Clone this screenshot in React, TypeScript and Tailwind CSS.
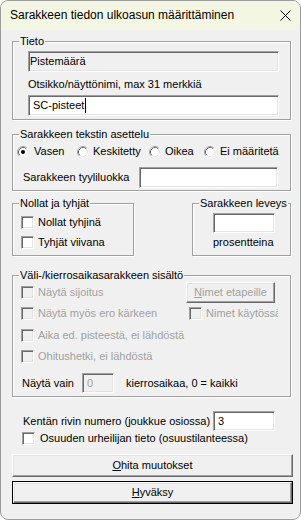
const sunken =
  "border border-t-[#a0a0a0] border-l-[#a0a0a0] border-r-white border-b-white shadow-[inset_1px_1px_0_#696969,inset_-1px_-1px_0_#e3e3e3]";
const raised =
  "border border-t-white border-l-white border-r-[#696969] border-b-[#696969] shadow-[inset_-1px_-1px_0_#a0a0a0,inset_1px_1px_0_#e3e3e3]";

function Group({ title, className = "", children }: { title: string; className?: string; children?: React.ReactNode }) {
  return (
    <div className={`border border-[#a0a0a0] shadow-[inset_1px_1px_0_#fff,1px_1px_0_#fff] ${className}`}>
      <div className="-mt-[7px] ml-[6px] w-fit px-[1px] bg-[#f0f0f0] leading-[13px] whitespace-nowrap">{title}</div>
      {children}
    </div>
  );
}

function Check({ disabled }: { disabled?: boolean }) {
  return <span className={`block w-[13px] h-[13px] shrink-0 ${sunken} ${disabled ? "bg-[#f0f0f0]" : "bg-white"}`} />;
}

function Radio({ checked }: { checked?: boolean }) {
  return (
    <svg width="12" height="12" viewBox="0 0 12 12" className="shrink-0">
      <circle cx="6" cy="6" r="5.5" fill="#fff" />
      <path d="M2.11 9.89 A5.5 5.5 0 0 1 9.89 2.11" fill="none" stroke="#a0a0a0" />
      <path d="M2.82 9.18 A4.5 4.5 0 0 1 9.18 2.82" fill="none" stroke="#696969" />
      <path d="M9.18 2.82 A4.5 4.5 0 0 1 2.82 9.18" fill="none" stroke="#e3e3e3" />
      {checked && <circle cx="6" cy="6" r="2" fill="#000" />}
    </svg>
  );
}

function CheckRow({ label, disabled, className = "" }: { label: string; disabled?: boolean; className?: string }) {
  return (
    <div className={`flex items-center gap-[4px] ${disabled ? "text-[#a0a0a0]" : ""} ${className}`}>
      <Check disabled={disabled} />
      <span className="whitespace-nowrap">{label}</span>
    </div>
  );
}

export default function App() {
  return (
    <div className="w-[301px] h-[520px] bg-white">
      <div className="w-[301px] h-[520px] rounded-[8px] border border-[#9c9c9c] bg-[#f0f0f0] overflow-hidden flex flex-col font-['Liberation_Sans',Arial,sans-serif] text-[11px] leading-[13px] text-black">
        <div className="h-[29px] shrink-0 bg-[#f3f6e2] flex items-center justify-between pl-[9px] pr-[9px]">
          <span className="text-[12px]">Sarakkeen tiedon ulkoasun määrittäminen</span>
          <svg width="11" height="11" viewBox="0 0 11 11">
            <path d="M0.5 0.5 L10.5 10.5 M10.5 0.5 L0.5 10.5" stroke="#000" strokeWidth="1" />
          </svg>
        </div>

        <div className="pl-[11px] flex flex-col">
          <Group title="Tieto" className="mt-[11px] w-[279px] pb-[3px]">
            <div className={`mt-[3px] ml-[15px] w-[251px] h-[21px] ${sunken} bg-[#f0f0f0] pl-[1px] flex items-center`}>Pistemäärä</div>
            <div className="mt-[6px] ml-[15px]">Otsikko/näyttönimi, max 31 merkkiä</div>
            <div className={`mt-[4px] ml-[15px] w-[251px] h-[21px] ${sunken} bg-white pl-[4px] flex items-center`}>
              <span>SC-pisteet</span>
              <span className="w-px h-[15px] bg-black ml-px" />
            </div>
          </Group>

          <Group title="Sarakkeen tekstin asettelu" className="mt-[14px] w-[279px] pb-[2px]">
            <div className="mt-[4px] h-[13px] pl-[4px] flex items-center">
              <div className="w-[60px] flex items-center gap-[5px]"><Radio checked /><span>Vasen</span></div>
              <div className="w-[72px] flex items-center gap-[4px]"><Radio /><span>Keskitetty</span></div>
              <div className="w-[55px] flex items-center gap-[4px]"><Radio /><span>Oikea</span></div>
              <div className="flex items-center gap-[4px]"><Radio /><span>Ei määritetä</span></div>
            </div>
            <div className="mt-[9px] h-[21px] pl-[10px] pr-[12px] flex items-center justify-between">
              <span>Sarakkeen tyyliluokka</span>
              <div className={`w-[139px] h-[21px] ${sunken} bg-white`} />
            </div>
          </Group>

          <div className="mt-[12px] w-[279px] flex justify-between">
            <Group title="Nollat ja tyhjät" className="w-[122px] h-[53px]">
              <CheckRow label="Nollat tyhjinä" className="mt-[6px] h-[13px] pl-[8px]" />
              <CheckRow label="Tyhjät viivana" className="mt-[7px] h-[13px] pl-[8px]" />
            </Group>
            <Group title="Sarakkeen leveys" className="w-[99px] h-[53px]">
              <div className={`mt-[3px] ml-[20px] w-[62px] h-[20px] ${sunken} bg-white`} />
              <div className="mt-[3px] ml-[20px]">prosentteina</div>
            </Group>
          </div>

          <Group title="Väli-/kierrosaikasarakkeen sisältö" className="mt-[19px] w-[279px] pb-[3px]">
            <div className="h-[21px] pl-[8px] pr-[15px] flex items-center justify-between">
              <CheckRow label="Näytä sijoitus" disabled />
              <div className={`w-[89px] h-[21px] ${raised} text-[#a0a0a0] flex items-center justify-center`}>
                <span><span className="underline">N</span>imet etapeille</span>
              </div>
            </div>
            <div className="h-[21px] pl-[8px] pr-[12px] flex items-center justify-between">
              <CheckRow label="Näytä myös ero kärkeen" disabled />
              <CheckRow label="Nimet käytössä" disabled className="w-[89px] overflow-hidden" />
            </div>
            <div className="mt-[1px] h-[21px] pl-[8px] flex items-center">
              <CheckRow label="Aika ed. pisteestä, ei lähdöstä" disabled />
            </div>
            <div className="h-[21px] pl-[8px] flex items-center">
              <CheckRow label="Ohitushetki, ei lähdöstä" disabled />
            </div>
            <div className="mt-[6px] h-[20px] pl-[9px] flex items-center">
              <span className="w-[60px]">Näytä vain</span>
              <div className={`w-[32px] h-[20px] ${sunken} bg-[#f0f0f0] text-[#a0a0a0] pl-[4px] flex items-center`}>0</div>
              <span className="ml-[12px]">kierrosaikaa, 0 = kaikki</span>
            </div>
          </Group>

          <div className="mt-[14px] h-[20px] pl-[11px] flex items-center">
            <span className="w-[190px]">Kentän rivin numero (joukkue osiossa)</span>
            <div className={`w-[62px] h-[20px] ${sunken} bg-white pl-[4px] flex items-center`}>3</div>
          </div>
          <div className="mt-[1px] h-[13px] pl-[10px] flex items-center gap-[5px]">
            <Check />
            <span>Osuuden urheilijan tieto (osuustilanteessa)</span>
          </div>

          <button className={`mt-[9px] w-[281px] h-[23px] ${raised} bg-[#f0f0f0] flex items-center justify-center`}>
            <span><span className="underline">O</span>hita muutokset</span>
          </button>
          <div className="mt-[4px] w-[281px] h-[23px] border border-black">
            <div className={`w-full h-full ${raised} flex items-center justify-center`}>
              <span><span className="underline">H</span>yväksy</span>
            </div>
          </div>
        </div>
      </div>
    </div>
  );
}
